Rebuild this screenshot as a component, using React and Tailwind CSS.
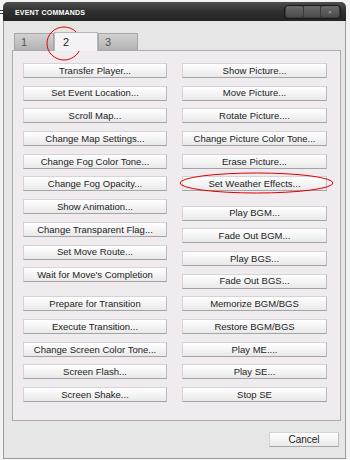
import React from 'react';

// Two columns of commands; the second array in each column sits after a small gap.
const LEFT = [
  ['Transfer Player...', 'Set Event Location...', 'Scroll Map...', 'Change Map Settings...', 'Change Fog Color Tone...', 'Change Fog Opacity...', 'Show Animation...', 'Change Transparent Flag...', 'Set Move Route...', "Wait for Move's Completion"],
  ['Prepare for Transition', 'Execute Transition...', 'Change Screen Color Tone...', 'Screen Flash...', 'Screen Shake...'],
];

const RIGHT = [
  ['Show Picture...', 'Move Picture...', 'Rotate Picture....', 'Change Picture Color Tone...', 'Erase Picture...', 'Set Weather Effects...'],
  ['Play BGM...', 'Fade Out BGM...', 'Play BGS...', 'Fade Out BGS...', 'Memorize BGM/BGS', 'Restore BGM/BGS', 'Play ME....', 'Play SE...', 'Stop SE'],
];

const font = { fontFamily: '"Liberation Sans", Arial, sans-serif' };

const CmdButton = ({ label, className = '' }) => (
  <button
    className={`flex h-[15px] items-center justify-center border border-[#d4d4d4] border-b-[#a4a4a4] border-r-[#bcbcbc] bg-gradient-to-b from-white to-[#e9e9e9] text-[9.5px] leading-none text-[#1c1c1c] ${className}`}
  >
    {label}
  </button>
);

const Column = ({ groups, width }) => (
  <div className={`flex flex-col ${width}`}>
    {groups.map((group, gi) => (
      <div key={gi} className={`flex flex-col gap-[7.7px] ${gi > 0 ? 'mt-[14.2px]' : ''}`}>
        {group.map((label) => (
          <CmdButton key={label} label={label} />
        ))}
      </div>
    ))}
  </div>
);

const Tab = ({ label, active }) =>
  active ? (
    <div className="relative z-10 -mb-px flex h-[19px] w-[44px] items-center border border-b-0 border-[#b8b8b8] bg-[#f4f2f4] pl-[8px] pt-[1px] text-[11px] text-[#222]">
      {label}
    </div>
  ) : (
    <div className="flex h-[17px] w-[40px] items-center border border-[#a6a6a6] border-b-0 bg-gradient-to-b from-[#d2d2d2] to-[#b2b2b2] pl-[6px] text-[11px] text-[#555]">
      {label}
    </div>
  );

export default function App() {
  return (
    <div className="relative h-[460px] w-[350px] overflow-hidden bg-[#f3f3f3]" style={font}>
      {/* sliver of something behind the window */}
      <div className="absolute left-0 top-[10px] h-[4px] w-[3px] border-y border-[#333]" />

      <div className="ml-[3px] mt-[2px] flex h-[457px] w-[343px] flex-col">
        {/* title bar */}
        <div className="flex h-[19px] items-center justify-between rounded-t-[5px] bg-gradient-to-b from-[#4e4e4e] via-[#2f2f2f] to-[#242424] pl-[12px] pr-[5px]">
          <span className="pt-[3px] text-[7px] font-bold tracking-[0.2px] text-white">EVENT COMMANDS</span>
          <div className="flex h-[14px] items-center gap-px rounded-[4px] border border-[#1a1a1a] bg-[#3a3a3a] px-px">
            <div className="h-[11px] w-[17px] rounded-[2px] bg-gradient-to-b from-[#6a6a6a] to-[#4c4c4c]" />
            <div className="h-[11px] w-[16px] bg-gradient-to-b from-[#6a6a6a] to-[#4c4c4c]" />
            <div className="flex h-[11px] w-[18px] items-center justify-center rounded-[2px] bg-gradient-to-b from-[#6a6a6a] to-[#4c4c4c] text-[6px] leading-none text-[#bbb]">
              ×
            </div>
          </div>
        </div>

        {/* window body */}
        <div className="flex flex-1 flex-col border-x border-b border-[#9c9c9c] bg-[#e6e6e6] pl-[8px] pr-[5px] pt-[11px]">
          <div className="flex items-end pl-[2px]">
            <Tab label="1" />
            <Tab label="2" active />
            <Tab label="3" />
          </div>

          <div className="flex h-[371px] w-[329px] gap-[15px] border border-[#ababab] bg-[#efebef] pl-[10px] pt-[12px]">
            <Column groups={LEFT} width="w-[144px]" />
            <Column groups={RIGHT} width="w-[145px]" />
          </div>

          <div className="mt-[11px] flex w-[329px] justify-end pr-[2px]">
            <CmdButton label="Cancel" className="w-[70px] text-[10px]" />
          </div>
        </div>
      </div>

      {/* red annotation marks */}
      <svg className="pointer-events-none absolute left-0 top-0" width="350" height="460">
        <ellipse cx="64" cy="43.5" rx="17" ry="16.5" fill="none" stroke="#e00000" strokeWidth="1" />
        <ellipse cx="256.5" cy="183" rx="76.5" ry="10" fill="none" stroke="#e00000" strokeWidth="1" />
      </svg>
    </div>
  );
}
